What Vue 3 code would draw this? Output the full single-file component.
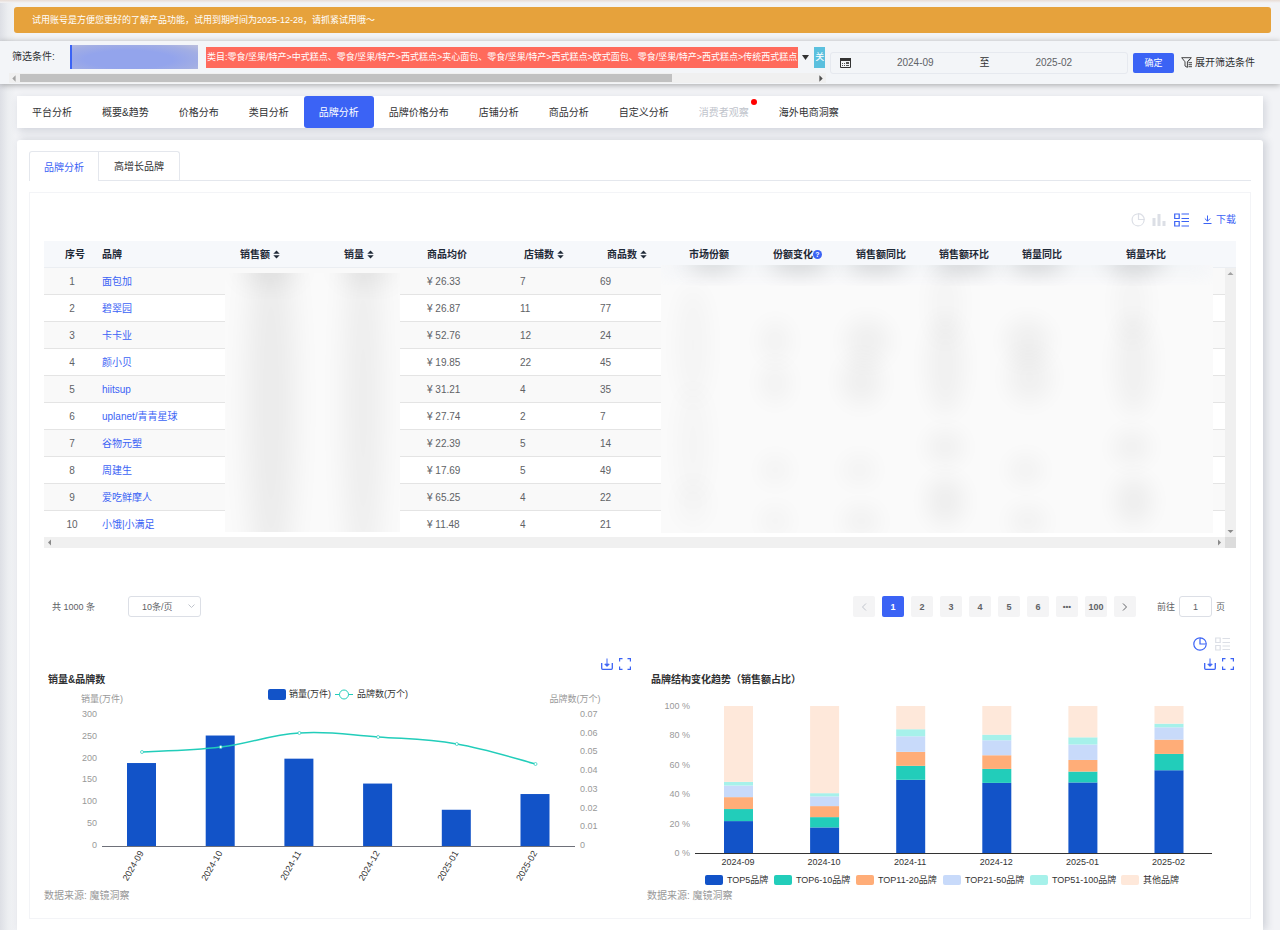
<script setup>
import { ref } from 'vue'

const navItems = [
  { label: '平台分析' }, { label: '概要&趋势' }, { label: '价格分布' }, { label: '类目分析' },
  { label: '品牌分析', active: true }, { label: '品牌价格分布' }, { label: '店铺分析' },
  { label: '商品分析' }, { label: '自定义分析' }, { label: '消费者观察', disabled: true },
  { label: '海外电商洞察' },
]

const startMonth = ref('2024-09')
const endMonth = ref('2025-02')
const gotoPage = ref('1')
const pageSize = ref('10')

const columns = [
  { label: '序号', width: 58 },
  { label: '品牌', width: 138 },
  { label: '销售额', width: 104, sort: true },
  { label: '销量', width: 83, sort: true },
  { label: '商品均价', width: 93 },
  { label: '店铺数', width: 80, sort: true },
  { label: '商品数', width: 89, sort: true },
  { label: '市场份额', width: 84 },
  { label: '份额变化', width: 83, help: true },
  { label: '销售额同比', width: 83 },
  { label: '销售额环比', width: 83 },
  { label: '销量同比', width: 104 },
  { label: '销量环比', width: 110 },
]

const rows = [
  ['面包加', '26.33', 7, 69],
  ['碧翠园', '26.87', 11, 77],
  ['卡卡业', '52.76', 12, 24],
  ['颜小贝', '19.85', 22, 45],
  ['hiitsup', '31.21', 4, 35],
  ['uplanet/青青星球', '27.74', 2, 7],
  ['谷物元塑', '22.39', 5, 14],
  ['周建生', '17.69', 5, 49],
  ['爱吃鲜摩人', '65.25', 4, 22],
  ['小饿|小满足', '11.48', 4, 21],
]

const pages = ['1', '2', '3', '4', '5', '6', '•••', '100']
const months = ['2024-09', '2024-10', '2024-11', '2024-12', '2025-01', '2025-02']

// Masked regions: [cx, cy, rx, ry, opacity]
const maskA = [
  [44, -4, 30, 10, 0.1], [142, -4, 28, 10, 0.1],
  [46, 130, 24, 190, 0.06], [138, 130, 18, 190, 0.055],
]
const maskB = [
  [52, -3, 26, 8, 0.16], [138, -3, 30, 8, 0.18], [215, -3, 30, 8, 0.18],
  [302, -3, 30, 8, 0.18], [375, -3, 28, 8, 0.18], [474, -3, 30, 8, 0.18],
  [32, 80, 16, 60, 0.025], [32, 180, 16, 60, 0.02], [32, 238, 16, 24, 0.02],
  [114, 76, 14, 20, 0.035], [114, 118, 14, 20, 0.035], [114, 205, 14, 14, 0.03], [114, 256, 14, 14, 0.03],
  [206, 76, 22, 22, 0.045], [200, 116, 20, 24, 0.045], [198, 205, 16, 14, 0.03], [200, 256, 18, 14, 0.04],
  [284, 40, 16, 40, 0.025], [284, 100, 18, 50, 0.04], [284, 182, 18, 16, 0.045], [284, 236, 18, 24, 0.05],
  [366, 76, 22, 22, 0.045], [368, 112, 22, 26, 0.04], [364, 205, 16, 14, 0.04], [366, 256, 18, 14, 0.04],
  [470, 40, 16, 40, 0.025], [472, 100, 18, 50, 0.04], [470, 182, 18, 16, 0.045], [472, 236, 18, 24, 0.05],
]

// Volume and brand-count chart
const volume = [190, 253, 200, 143, 83, 119]
const brandY = [66, 61, 47, 51, 58, 78]
const leftX = (i) => 98 + i * 78.7
const volumeAxis = [300, 250, 200, 150, 100, 50, 0]
const brandAxis = ['0.07', '0.06', '0.05', '0.04', '0.03', '0.02', '0.01', '0']
const barHeight = (v) => (v / 300) * 131

const linePath = (() => {
  const p = brandY.map((y, i) => [leftX(i), y])
  let d = `M${p[0][0]} ${p[0][1]}`
  for (let i = 0; i < p.length - 1; i++) {
    const a = p[i - 1] || p[i]
    const b = p[i]
    const c = p[i + 1]
    const e = p[i + 2] || c
    d += ` C${b[0] + (c[0] - a[0]) / 5} ${b[1] + (c[1] - a[1]) / 5} ${c[0] - (e[0] - b[0]) / 5} ${c[1] - (e[1] - b[1]) / 5} ${c[0]} ${c[1]}`
  }
  return d
})()

// Brand structure chart: cumulative shares per month
const colors = ['#1253c8', '#22cdba', '#ffad78', '#c8dafa', '#a6f1ea', '#fee8da']
const cumulative = [
  [21.7, 29.9, 38, 45.9, 48.4, 100],
  [17.4, 24.4, 31.9, 38.5, 40.7, 100],
  [49.8, 59.3, 68.8, 79.4, 84.2, 100],
  [47.7, 57.2, 66.5, 76.7, 80.5, 100],
  [48, 55.4, 63.3, 73.8, 78.7, 100],
  [56.3, 67.4, 77.1, 85.5, 88, 100],
]
const rightX = (i) => 91 + i * 86.1
const shareY = (v) => 167 - v * 1.47
const segments = cumulative.flatMap((list, m) =>
  list.map((v, k) => ({
    x: rightX(m) - 14,
    y: shareY(v),
    h: shareY(k ? list[k - 1] : 0) - shareY(v),
    fill: colors[k],
  })),
)
const shareAxis = [100, 80, 60, 40, 20, 0]
const shareLegend = [
  [58, 'TOP5品牌'], [127, 'TOP6-10品牌'], [209, 'TOP11-20品牌'],
  [296, 'TOP21-50品牌'], [383, 'TOP51-100品牌'], [474, '其他品牌'],
]
</script>

<template>
  <div class="page">
    <div class="notice">试用账号是方便您更好的了解产品功能，试用到期时间为2025-12-28，请抓紧试用哦～</div>

    <section class="filters">
      <div class="conditions">
        <div class="tags">
          <span class="tags-label">筛选条件:</span>
          <span class="tag masked"></span>
          <span class="tag category">类目:零食/坚果/特产&gt;中式糕点、零食/坚果/特产&gt;西式糕点&gt;夹心面包、零食/坚果/特产&gt;西式糕点&gt;欧式面包、零食/坚果/特产&gt;西式糕点&gt;传统西式糕点</span>
          <svg class="caret" viewBox="0 0 7 5"><path d="M0 0h7L3.500 5z" fill="#333" /></svg>
          <span class="tag keyword">关</span>
        </div>
        <div class="hbar small">
          <svg viewBox="0 0 10 10"><path d="M6 2v6L3 5z" fill="#a3a3a3" /></svg>
          <div class="track"><div class="thumb"></div></div>
          <svg viewBox="0 0 10 10"><path d="M4 2v6l3-3z" fill="#505050" /></svg>
        </div>
      </div>

      <div class="range">
        <svg class="cal" viewBox="0 0 11 10">
          <path d="M.5 .5h10v9H.5z" fill="none" stroke="#333" />
          <path d="M0 0h11v3H0z" fill="#333" />
          <path d="M2 5h1v1H2zM4 5h1v1H4zM2 7h1v1H2zM4 7h1v1H4zM6 4h3v2H6zM6 7h3v1H6z" fill="#555" />
        </svg>
        <input v-model="startMonth" type="text" aria-label="开始月份" />
        <span>至</span>
        <input v-model="endMonth" type="text" aria-label="结束月份" />
      </div>
      <button class="confirm" type="button">确定</button>
      <button class="expand" type="button">
        <svg viewBox="0 0 11 11" fill="none" stroke="#444">
          <path d="M.7 .7h9.600L7 4.500M.7 .7L4 4.800v4.200l2.400 1.400V4.800L9 1.800" />
          <path d="M7.500 5.700H11M7.500 7.700H11M7.500 9.700H11" />
        </svg>
        展开筛选条件
      </button>
    </section>

    <nav class="nav">
      <a v-for="n in navItems" :key="n.label" href="#" :class="{ active: n.active, disabled: n.disabled }">{{ n.label }}<i v-if="n.disabled" class="dot"></i></a>
    </nav>

    <main class="card">
      <div class="tabs">
        <button type="button" class="tab current">品牌分析</button>
        <button type="button" class="tab">高增长品牌</button>
      </div>

      <section class="panel">
        <div class="toolbar">
          <button type="button" aria-label="饼图" class="ico muted">
            <svg viewBox="0 0 14 14" width="14" height="14" fill="none" stroke="currentColor" stroke-width="1.200"><path d="M6 1A6 6 0 1 0 13 8" /><path d="M7.500 .7V6.500H13.300A6 6 0 0 0 7.500 .7z" /><path d="M6 1h1.500M13 8V6.500" /></svg>
          </button>
          <button type="button" aria-label="柱状图" class="ico muted">
            <svg viewBox="0 0 14 14" width="14" height="14" fill="currentColor"><path d="M.5 5h3v8h-3zM5.500 1h3v12h-3zM10.500 8h3v5h-3z" /></svg>
          </button>
          <button type="button" aria-label="列表" class="ico list">
            <svg viewBox="0 0 15 14" width="15" height="14" fill="none" stroke="currentColor" stroke-width="1.200"><path d="M.7 1h4.500v4.500H.7zM.7 8.500h4.500V13H.7zM7.500 1H15M7.500 5.500H15M7.500 8.500H15M7.500 13H15" /></svg>
          </button>
          <button type="button" class="download">
            <svg viewBox="0 0 9 9" width="9" height="9" fill="none" stroke="currentColor"><path d="M4.500 .5v5.500M1.800 3.500l2.700 2.700 2.700-2.700M.5 8.500h8" /></svg>
            下载
          </button>
        </div>

        <div class="table-box">
          <table>
            <colgroup>
              <col v-for="c in columns" :key="c.label" :style="{ width: c.width + 'px' }" />
            </colgroup>
            <thead>
              <tr>
                <th v-for="c in columns" :key="c.label">{{ c.label }}<svg v-if="c.sort" class="sort" viewBox="0 0 7 9"><path d="M.3 3.800h6.400L3.500 .5zM.3 5.200h6.400L3.500 8.500z" fill="#1f2937" /></svg><span v-if="c.help" class="help">?</span></th>
              </tr>
            </thead>
            <tbody>
              <tr v-for="(r, i) in rows" :key="r[0]">
                <td>{{ i + 1 }}</td>
                <td><a href="#">{{ r[0] }}</a></td>
                <td></td>
                <td></td>
                <td>¥ {{ r[1] }}</td>
                <td>{{ r[2] }}</td>
                <td>{{ r[3] }}</td>
                <td colspan="6"></td>
              </tr>
            </tbody>
          </table>
          <svg class="mask mask-a" viewBox="0 0 175 259" preserveAspectRatio="none">
            <filter id="soft-a" x="-100%" y="-100%" width="300%" height="300%"><feGaussianBlur stdDeviation="14" /></filter>
            <ellipse v-for="(b, i) in maskA" :key="i" :cx="b[0]" :cy="b[1]" :rx="b[2]" :ry="b[3]" :opacity="b[4]" filter="url(#soft-a)" />
          </svg>
          <svg class="mask mask-b" viewBox="0 0 551 268" preserveAspectRatio="none">
            <filter id="soft-b" x="-100%" y="-100%" width="300%" height="300%"><feGaussianBlur stdDeviation="11" /></filter>
            <rect x="0" y="-8" width="551" height="14" fill="#e8edf5" opacity=".7" filter="url(#soft-b)" />
            <ellipse v-for="(b, i) in maskB" :key="i" :cx="b[0]" :cy="b[1]" :rx="b[2]" :ry="b[3]" :opacity="b[4]" filter="url(#soft-b)" />
          </svg>
          <div class="vbar">
            <svg viewBox="0 0 11 11"><path d="M2.500 7h6l-3-3z" fill="#a3a3a3" /></svg>
            <svg viewBox="0 0 11 11"><path d="M2.500 4h6l-3 3z" fill="#8a8a8a" /></svg>
          </div>
        </div>
        <div class="hbar">
          <svg viewBox="0 0 11 11"><path d="M7 2.500v6l-3-3z" fill="#8a8a8a" /></svg>
          <div class="track"></div>
          <svg viewBox="0 0 11 11"><path d="M4 2.500v6l3-3z" fill="#8a8a8a" /></svg>
          <div class="corner"></div>
        </div>

        <div class="pagination">
          <span class="total">共 1000 条</span>
          <span class="size">
            <select v-model="pageSize" aria-label="每页条数"><option value="10">10条/页</option><option value="20">20条/页</option></select>
            <svg viewBox="0 0 7 5" fill="none" stroke="#c0c4cc"><path d="M.5 .5l3 3 3-3" /></svg>
          </span>
          <div class="pager">
            <button type="button" aria-label="上一页"><svg viewBox="0 0 6 8" fill="none" stroke="#c0c4cc"><path d="M5 .5L1.500 4 5 7.500" /></svg></button>
            <button v-for="p in pages" :key="p" type="button" :class="{ on: p === '1', dots: p === '•••' }">{{ p }}</button>
            <button type="button" aria-label="下一页"><svg viewBox="0 0 6 8" fill="none" stroke="#606266"><path d="M1 .5L4.500 4 1 7.500" /></svg></button>
          </div>
          <label class="goto">前往<input v-model="gotoPage" type="text" />页</label>
        </div>

        <div class="chart-switch">
          <button type="button" aria-label="图表" class="ico">
            <svg viewBox="0 0 14 14" width="14" height="14" fill="none" stroke="currentColor" stroke-width="1.200"><path d="M6.500 .8A6.200 6.200 0 1 0 13.200 7.500" /><path d="M7 .8V7H13.300A6.200 6.200 0 0 0 7 .8z" /></svg>
          </button>
          <button type="button" aria-label="表格" class="ico muted">
            <svg viewBox="0 0 15 14" width="15" height="14" fill="none" stroke="currentColor" stroke-width="1.200"><path d="M.7 1h4.500v4.500H.7zM.7 8.500h4.500V13H.7zM7.500 1.500H15M7.500 5.500H15M7.500 9H15M7.500 12.500H15" /></svg>
          </button>
        </div>

        <div class="charts">
          <article class="chart">
            <div class="chart-tools">
              <button type="button" aria-label="下载图表" class="ico"><svg viewBox="0 0 12 12" width="12" height="12" fill="none" stroke="currentColor"><path d="M.7 5v5.300q0 1 1 1h8.600q1 0 1-1V5" stroke-width="1.300" /><path d="M6 .5V8M3.800 6.200L6 8.400l2.200-2.200z" fill="currentColor" /></svg></button>
              <button type="button" aria-label="全屏" class="ico"><svg viewBox="0 0 12 12" width="12" height="12" fill="none" stroke="currentColor" stroke-width="1.200"><path d="M.6 3.500V.6h2.900M8.500 .6h2.900v2.900M11.400 8.500v2.900H8.500M3.500 11.400H.6V8.500" /></svg></button>
            </div>
            <h3>销量&amp;品牌数</h3>
            <svg class="plot" viewBox="0 0 589 201">
              <g class="axis">
                <text x="58" y="16" text-anchor="middle">销量(万件)</text>
                <text x="531" y="16" text-anchor="middle">品牌数(万个)</text>
                <text v-for="(v, i) in volumeAxis" :key="v" x="53" :y="31 + i * 21.83" text-anchor="end">{{ v }}</text>
                <text v-for="(v, i) in brandAxis" :key="v" x="536" :y="31 + i * 18.71">{{ v }}</text>
              </g>
              <rect x="224" y="3" width="18" height="11" rx="2" fill="#1253c8" />
              <text x="245" y="11">销量(万件)</text>
              <path d="M291 8.500h18" stroke="#22cdba" />
              <circle cx="300" cy="8.500" r="4.500" fill="#fff" stroke="#22cdba" />
              <text x="313" y="11">品牌数(万个)</text>
              <rect v-for="(v, i) in volume" :key="i" :x="leftX(i) - 15" :y="160 - barHeight(v)" width="29" :height="barHeight(v)" fill="#1253c8" />
              <path d="M58 160.500H531" stroke="#6e7079" />
              <path :d="linePath" fill="none" stroke="#22cdba" stroke-width="1.500" />
              <circle v-for="(y, i) in brandY" :key="i" :cx="leftX(i)" :cy="y" r="1.500" fill="#fff" stroke="#22cdba" stroke-width=".7" />
              <text v-for="(m, i) in months" :key="m" :transform="`translate(${leftX(i) + 2} 167) rotate(-60)`" text-anchor="end">{{ m }}</text>
            </svg>
            <p class="source">数据来源: 魔镜洞察</p>
          </article>

          <article class="chart">
            <div class="chart-tools">
              <button type="button" aria-label="下载图表" class="ico"><svg viewBox="0 0 12 12" width="12" height="12" fill="none" stroke="currentColor"><path d="M.7 5v5.300q0 1 1 1h8.600q1 0 1-1V5" stroke-width="1.300" /><path d="M6 .5V8M3.800 6.200L6 8.400l2.200-2.200z" fill="currentColor" /></svg></button>
              <button type="button" aria-label="全屏" class="ico"><svg viewBox="0 0 12 12" width="12" height="12" fill="none" stroke="currentColor" stroke-width="1.200"><path d="M.6 3.500V.6h2.900M8.500 .6h2.900v2.900M11.400 8.500v2.900H8.500M3.500 11.400H.6V8.500" /></svg></button>
            </div>
            <h3>品牌结构变化趋势（销售额占比）</h3>
            <svg class="plot" viewBox="0 0 589 201">
              <g class="axis">
                <text v-for="(v, i) in shareAxis" :key="v" x="43" :y="23 + i * 29.4" text-anchor="end">{{ v }} %</text>
              </g>
              <rect v-for="(s, i) in segments" :key="i" :x="s.x" :y="s.y" width="29" :height="s.h" :fill="s.fill" />
              <path d="M48 167.500H565" stroke="#333" />
              <text v-for="(m, i) in months" :key="m" :x="rightX(i)" y="179" text-anchor="middle">{{ m }}</text>
              <g v-for="(l, i) in shareLegend" :key="l[1]">
                <rect :x="l[0]" y="189" width="18" height="10" rx="2" :fill="colors[i]" />
                <text :x="l[0] + 22" y="197">{{ l[1] }}</text>
              </g>
            </svg>
            <p class="source">数据来源: 魔镜洞察</p>
          </article>
        </div>
      </section>
    </main>
  </div>
</template>

<style>
body {
  margin: 0;
  background: #f2f3f6;
}
</style>

<style scoped>
.page {
  box-sizing: border-box;
  padding-top: 7px;
  font-family: "Liberation Sans", "Noto Sans CJK SC", sans-serif;
  font-size: 10px;
  line-height: 14px;
  color: #303133;
  background: linear-gradient(#e8dcd5, #f2f3f6 3px, transparent 3px), linear-gradient(90deg, #dddfe5, #eceef1 8px, #f2f3f6 16px);
}
button, input, select {
  font: inherit;
  color: inherit;
  box-sizing: border-box;
}
button {
  padding: 0;
  border: 0;
  background: none;
  cursor: pointer;
}
a {
  text-decoration: none;
  color: inherit;
}
svg {
  display: block;
}
.notice {
  margin: 0 9px 0 14px;
  padding-left: 18px;
  height: 26px;
  line-height: 26px;
  border-radius: 3px;
  background: #e6a23c;
  color: #fff;
  font-size: 9px;
}
.filters {
  display: flex;
  align-items: center;
  box-sizing: border-box;
  height: 43px;
  margin-top: 8px;
  padding: 0 25px 0 9px;
  background: #f3f5f8;
  box-shadow: 0 1px 6px rgba(0, 0, 0, 0.32);
  clip-path: inset(-8px 0 -8px 0);
}
.conditions {
  flex: 1;
  min-width: 0;
  overflow: hidden;
  padding-top: 3px;
}
.tags {
  display: flex;
  align-items: center;
  height: 24px;
  padding-left: 3px;
  white-space: nowrap;
}
.tags-label {
  flex: none;
  width: 58px;
}
.tag {
  flex: none;
  box-sizing: border-box;
  height: 21px;
  line-height: 20px;
  font-size: 9px;
  color: #fff;
}
.masked {
  width: 128px;
  height: 24px;
  margin-right: 8px;
  border-left: 2px solid #3b63f5;
  background: radial-gradient(ellipse at 45% 60%, #93a4ec 45%, #a2aee4 75%, #bcbfdc 100%);
}
.category {
  padding: 0 1px;
  background: #ff6a5c;
}
.caret {
  flex: none;
  width: 7px;
  height: 5px;
  margin: 0 5px 0 4px;
}
.keyword {
  padding: 0 1px;
  background: #5bc0de;
}
.hbar {
  display: flex;
  align-items: center;
  height: 11px;
  background: #f0f0f0;
}
.hbar svg {
  width: 11px;
  height: 11px;
}
.hbar .track {
  flex: 1;
}
.hbar.small {
  height: 10px;
  margin-top: 4px;
}
.thumb {
  width: 82%;
  height: 8px;
  background: #c1c1c1;
}
.corner {
  width: 11px;
  height: 11px;
  background: #dcdcdc;
}
.range {
  display: flex;
  align-items: center;
  box-sizing: border-box;
  width: 298px;
  height: 22px;
  margin: 0 5px 0 4px;
  padding: 0 9px;
  border: 1px solid #e6e9ef;
  border-radius: 3px;
}
.cal {
  flex: none;
  width: 11px;
  height: 10px;
}
.range input {
  flex: 1;
  min-width: 0;
  border: 0;
  background: none;
  text-align: center;
  color: #606266;
}
.confirm {
  width: 41px;
  height: 20px;
  border-radius: 2px;
  background: #3b63f5;
  color: #fff;
  font-size: 9px;
}
.expand {
  display: flex;
  align-items: center;
  gap: 3px;
  margin-left: 7px;
  white-space: nowrap;
}
.expand svg {
  width: 11px;
  height: 11px;
}
.nav {
  display: flex;
  height: 32px;
  margin: 12px 17px 0;
  background: #fff;
  box-shadow: 2px 3px 8px rgba(40, 50, 80, 0.16);
}
.nav a {
  position: relative;
  height: 32px;
  padding: 0 15px;
  line-height: 33px;
}
.nav .active {
  border-radius: 3px;
  background: #3b63f5;
  color: #fff;
}
.nav .disabled {
  color: #c0c4cc;
}
.dot {
  position: absolute;
  top: 3px;
  right: 7px;
  width: 6px;
  height: 6px;
  border-radius: 50%;
  background: #f00;
}
.card {
  margin: 12px 17px 0;
  padding: 11px 12px;
  border-radius: 3px 3px 0 0;
  background: #fff;
  box-shadow: 3px 0 8px rgba(40, 50, 80, 0.18);
}
.tabs {
  display: flex;
  height: 29px;
  margin-bottom: 11px;
  border-bottom: 1px solid #e4e7ed;
}
.tab {
  height: 29px;
  padding: 2px 15px 0;
  border: 1px solid #e4e7ed;
  border-bottom: 0;
  border-left: 0;
  border-radius: 0 3px 0 0;
}
.tab.current {
  height: 30px;
  padding: 2px 14px 0;
  border-left: 1px solid #e4e7ed;
  border-radius: 3px 0 0 0;
  background: #fff;
  color: #3b63f5;
}
.panel {
  padding: 0 14px 15px;
  border: 1px solid #f3f4f7;
}
.toolbar {
  display: flex;
  justify-content: flex-end;
  align-items: center;
  box-sizing: border-box;
  height: 48px;
  padding-top: 5px;
  gap: 7px;
}
.ico {
  color: #3b63f5;
}
.ico.muted {
  color: #dcdfe6;
}
.list {
  margin: 0 7px 0 1px;
}
.download {
  display: flex;
  align-items: center;
  gap: 4px;
  color: #3b63f5;
}
.table-box {
  position: relative;
}
table {
  width: 100%;
  table-layout: fixed;
  border-collapse: separate;
  border-spacing: 0;
}
th, td {
  box-sizing: border-box;
  height: 27px;
  padding: 2px 0 0;
  text-align: left;
  white-space: nowrap;
  border-bottom: 1px solid #e4e4e4;
  color: #606266;
}
th {
  background: #f6f8fb;
  color: #1f2937;
  font-weight: bold;
  border-bottom: 1px solid #ebeef2;
}
th:first-child, td:first-child {
  text-align: center;
}
th:first-child {
  padding-left: 4px;
}
td:first-child {
  padding-right: 2px;
}
th:nth-child(6) {
  padding-left: 4px;
}
th:nth-child(7) {
  padding-left: 7px;
}
tbody tr:nth-child(odd) td {
  background: #f9f9f9;
}
tbody tr:last-child td {
  border-bottom: 0;
  height: 26px;
}
td a {
  color: #3b63f5;
}
.sort {
  display: inline-block;
  width: 7px;
  height: 9px;
  margin-left: 3px;
  vertical-align: -1px;
}
.help {
  display: inline-block;
  width: 9px;
  height: 9px;
  border-radius: 50%;
  background: #3b63f5;
  color: #fff;
  font-size: 7px;
  line-height: 9px;
  text-align: center;
  vertical-align: 1px;
}
.mask {
  position: absolute;
  overflow: hidden;
  background: #fafafa;
}
.mask-a {
  top: 32px;
  left: 15.2%;
  width: 14.7%;
  height: 259px;
}
.mask-b {
  top: 24px;
  left: 51.8%;
  width: 46.3%;
  height: 268px;
}
.vbar {
  position: absolute;
  top: 27px;
  right: 0;
  bottom: 0;
  display: flex;
  flex-direction: column;
  justify-content: space-between;
  width: 11px;
  background: #f0f0f0;
}
.pagination {
  display: flex;
  align-items: center;
  height: 21px;
  margin-top: 48px;
  padding: 0 11px 0 8px;
  font-size: 9px;
  color: #606266;
}
.total {
  width: 76px;
}
.size {
  position: relative;
  width: 73px;
}
.size select {
  display: block;
  width: 100%;
  height: 21px;
  padding: 0 0 0 13px;
  border: 1px solid #dcdfe6;
  border-radius: 3px;
  background: #fff;
  appearance: none;
}
.size svg {
  position: absolute;
  top: 8px;
  right: 6px;
  width: 7px;
  height: 5px;
}
.pager {
  display: flex;
  gap: 7px;
  margin-left: auto;
}
.pager button {
  display: flex;
  align-items: center;
  justify-content: center;
  width: 22px;
  height: 21px;
  border-radius: 2px;
  background: #f4f4f5;
  font-weight: bold;
}
.pager svg {
  width: 6px;
  height: 8px;
}
.pager .on {
  background: #3b63f5;
  color: #fff;
}
.pager .dots {
  font-size: 8px;
}
.goto {
  display: flex;
  align-items: center;
  gap: 4px;
  margin-left: 21px;
}
.goto input {
  width: 33px;
  height: 21px;
  padding: 0;
  border: 1px solid #dcdfe6;
  border-radius: 3px;
  text-align: center;
}
.chart-switch {
  display: flex;
  justify-content: flex-end;
  gap: 8px;
  height: 14px;
  margin-top: 20px;
  padding-right: 6px;
}
.charts {
  display: grid;
  grid-template-columns: 1fr 1fr;
  gap: 14px;
  margin-top: 6px;
}
.chart-tools {
  display: flex;
  justify-content: flex-end;
  gap: 6px;
  height: 14px;
  padding-right: 2px;
}
.chart h3 {
  margin: 0 0 0 4px;
  padding-top: 2px;
  height: 13px;
  font-size: 10px;
}
.plot {
  width: 100%;
  height: auto;
}
.plot text {
  font-size: 9px;
  fill: #333;
}
.plot .axis text {
  fill: #999;
}
.source {
  margin: 0;
  height: 16px;
  line-height: 18px;
  color: #999;
}
</style>
